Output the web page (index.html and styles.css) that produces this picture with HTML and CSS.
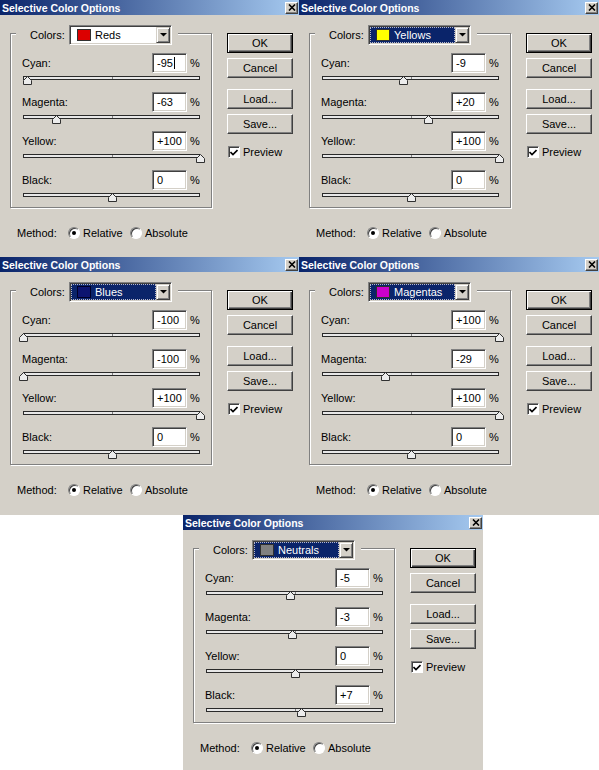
FILE: index.html
```html
<!DOCTYPE html>
<html>
<head>
<meta charset="utf-8">
<link rel="stylesheet" href="styles.css">
</head>
<body>
<div class="page">
  <div class="grid">
    <!-- Reds -->
    <div class="dlg">
      <div class="titlebar"><span class="title">Selective Color Options</span><span class="close"><svg width="8" height="7" viewBox="0 0 8 7"><path d="M1 0.5 L7 6.5 M7 0.5 L1 6.5" stroke="#000" stroke-width="1.6"/></svg></span></div>
      <div class="body">
        <div class="left">
          <div class="group">
            <div class="legend"><span class="legend-label">Colors:</span><div class="combo"><div class="field"><span class="swatch sw-red"></span><span>Reds</span></div><span class="cbtn"><svg width="7" height="4" viewBox="0 0 7 4"><polygon points="0,0 7,0 3.5,3.5" fill="#000"/></svg></span></div></div>
            <div class="rows">
              <div class="row"><div class="line"><span class="lbl">Cyan:</span><span class="num">-95<span class="caret"></span></span><span class="pct">%</span></div><div class="slider"><div class="track"></div><svg class="thumb" style="left:2.5%" width="9" height="9" viewBox="0 0 9 9"><polygon points="0.5,8.5 0.5,4.5 4.5,0.5 8.5,4.5 8.5,8.5" fill="#ececec" stroke="#303030"/></svg></div></div>
              <div class="row"><div class="line"><span class="lbl">Magenta:</span><span class="num">-63</span><span class="pct">%</span></div><div class="slider"><div class="track"></div><svg class="thumb" style="left:18.5%" width="9" height="9" viewBox="0 0 9 9"><polygon points="0.5,8.5 0.5,4.5 4.5,0.5 8.5,4.5 8.5,8.5" fill="#ececec" stroke="#303030"/></svg></div></div>
              <div class="row"><div class="line"><span class="lbl">Yellow:</span><span class="num">+100</span><span class="pct">%</span></div><div class="slider"><div class="track"></div><svg class="thumb" style="left:100%" width="9" height="9" viewBox="0 0 9 9"><polygon points="0.5,8.5 0.5,4.5 4.5,0.5 8.5,4.5 8.5,8.5" fill="#ececec" stroke="#303030"/></svg></div></div>
              <div class="row"><div class="line"><span class="lbl">Black:</span><span class="num">0</span><span class="pct">%</span></div><div class="slider"><div class="track"></div><svg class="thumb" style="left:50%" width="9" height="9" viewBox="0 0 9 9"><polygon points="0.5,8.5 0.5,4.5 4.5,0.5 8.5,4.5 8.5,8.5" fill="#ececec" stroke="#303030"/></svg></div></div>
            </div>
          </div>
          <div class="method"><span class="method-label">Method:</span><span class="opt"><span class="radio on"></span><span class="opt-text">Relative</span></span><span class="opt"><span class="radio"></span><span class="opt-text">Absolute</span></span></div>
        </div>
        <div class="right">
          <div class="btn default">OK</div>
          <div class="btn cancel">Cancel</div>
          <div class="btn load">Load...</div>
          <div class="btn save">Save...</div>
          <div class="chk"><span class="box"><svg width="8" height="7" viewBox="0 0 8 7"><path d="M0.5 3 L3 5.5 L7.5 1" stroke="#000" stroke-width="1.6" fill="none"/></svg></span><span>Preview</span></div>
        </div>
      </div>
    </div>

    <!-- Yellows -->
    <div class="dlg">
      <div class="titlebar"><span class="title">Selective Color Options</span><span class="close"><svg width="8" height="7" viewBox="0 0 8 7"><path d="M1 0.5 L7 6.5 M7 0.5 L1 6.5" stroke="#000" stroke-width="1.6"/></svg></span></div>
      <div class="body">
        <div class="left">
          <div class="group">
            <div class="legend"><span class="legend-label">Colors:</span><div class="combo"><div class="field sel"><span class="swatch sw-yellow"></span><span>Yellows</span></div><span class="cbtn"><svg width="7" height="4" viewBox="0 0 7 4"><polygon points="0,0 7,0 3.5,3.5" fill="#000"/></svg></span></div></div>
            <div class="rows">
              <div class="row"><div class="line"><span class="lbl">Cyan:</span><span class="num">-9</span><span class="pct">%</span></div><div class="slider"><div class="track"></div><svg class="thumb" style="left:45.5%" width="9" height="9" viewBox="0 0 9 9"><polygon points="0.5,8.5 0.5,4.5 4.5,0.5 8.5,4.5 8.5,8.5" fill="#ececec" stroke="#303030"/></svg></div></div>
              <div class="row"><div class="line"><span class="lbl">Magenta:</span><span class="num">+20</span><span class="pct">%</span></div><div class="slider"><div class="track"></div><svg class="thumb" style="left:60%" width="9" height="9" viewBox="0 0 9 9"><polygon points="0.5,8.5 0.5,4.5 4.5,0.5 8.5,4.5 8.5,8.5" fill="#ececec" stroke="#303030"/></svg></div></div>
              <div class="row"><div class="line"><span class="lbl">Yellow:</span><span class="num">+100</span><span class="pct">%</span></div><div class="slider"><div class="track"></div><svg class="thumb" style="left:100%" width="9" height="9" viewBox="0 0 9 9"><polygon points="0.5,8.5 0.5,4.5 4.5,0.5 8.5,4.5 8.5,8.5" fill="#ececec" stroke="#303030"/></svg></div></div>
              <div class="row"><div class="line"><span class="lbl">Black:</span><span class="num">0</span><span class="pct">%</span></div><div class="slider"><div class="track"></div><svg class="thumb" style="left:50%" width="9" height="9" viewBox="0 0 9 9"><polygon points="0.5,8.5 0.5,4.5 4.5,0.5 8.5,4.5 8.5,8.5" fill="#ececec" stroke="#303030"/></svg></div></div>
            </div>
          </div>
          <div class="method"><span class="method-label">Method:</span><span class="opt"><span class="radio on"></span><span class="opt-text">Relative</span></span><span class="opt"><span class="radio"></span><span class="opt-text">Absolute</span></span></div>
        </div>
        <div class="right">
          <div class="btn default">OK</div>
          <div class="btn cancel">Cancel</div>
          <div class="btn load">Load...</div>
          <div class="btn save">Save...</div>
          <div class="chk"><span class="box"><svg width="8" height="7" viewBox="0 0 8 7"><path d="M0.5 3 L3 5.5 L7.5 1" stroke="#000" stroke-width="1.6" fill="none"/></svg></span><span>Preview</span></div>
        </div>
      </div>
    </div>

    <!-- Blues -->
    <div class="dlg mid">
      <div class="titlebar"><span class="title">Selective Color Options</span><span class="close"><svg width="8" height="7" viewBox="0 0 8 7"><path d="M1 0.5 L7 6.5 M7 0.5 L1 6.5" stroke="#000" stroke-width="1.6"/></svg></span></div>
      <div class="body">
        <div class="left">
          <div class="group">
            <div class="legend"><span class="legend-label">Colors:</span><div class="combo"><div class="field sel"><span class="swatch sw-blue"></span><span>Blues</span></div><span class="cbtn"><svg width="7" height="4" viewBox="0 0 7 4"><polygon points="0,0 7,0 3.5,3.5" fill="#000"/></svg></span></div></div>
            <div class="rows">
              <div class="row"><div class="line"><span class="lbl">Cyan:</span><span class="num">-100</span><span class="pct">%</span></div><div class="slider"><div class="track"></div><svg class="thumb" style="left:0%" width="9" height="9" viewBox="0 0 9 9"><polygon points="0.5,8.5 0.5,4.5 4.5,0.5 8.5,4.5 8.5,8.5" fill="#ececec" stroke="#303030"/></svg></div></div>
              <div class="row"><div class="line"><span class="lbl">Magenta:</span><span class="num">-100</span><span class="pct">%</span></div><div class="slider"><div class="track"></div><svg class="thumb" style="left:0%" width="9" height="9" viewBox="0 0 9 9"><polygon points="0.5,8.5 0.5,4.5 4.5,0.5 8.5,4.5 8.5,8.5" fill="#ececec" stroke="#303030"/></svg></div></div>
              <div class="row"><div class="line"><span class="lbl">Yellow:</span><span class="num">+100</span><span class="pct">%</span></div><div class="slider"><div class="track"></div><svg class="thumb" style="left:100%" width="9" height="9" viewBox="0 0 9 9"><polygon points="0.5,8.5 0.5,4.5 4.5,0.5 8.5,4.5 8.5,8.5" fill="#ececec" stroke="#303030"/></svg></div></div>
              <div class="row"><div class="line"><span class="lbl">Black:</span><span class="num">0</span><span class="pct">%</span></div><div class="slider"><div class="track"></div><svg class="thumb" style="left:50%" width="9" height="9" viewBox="0 0 9 9"><polygon points="0.5,8.5 0.5,4.5 4.5,0.5 8.5,4.5 8.5,8.5" fill="#ececec" stroke="#303030"/></svg></div></div>
            </div>
          </div>
          <div class="method"><span class="method-label">Method:</span><span class="opt"><span class="radio on"></span><span class="opt-text">Relative</span></span><span class="opt"><span class="radio"></span><span class="opt-text">Absolute</span></span></div>
        </div>
        <div class="right">
          <div class="btn default">OK</div>
          <div class="btn cancel">Cancel</div>
          <div class="btn load">Load...</div>
          <div class="btn save">Save...</div>
          <div class="chk"><span class="box"><svg width="8" height="7" viewBox="0 0 8 7"><path d="M0.5 3 L3 5.5 L7.5 1" stroke="#000" stroke-width="1.6" fill="none"/></svg></span><span>Preview</span></div>
        </div>
      </div>
    </div>

    <!-- Magentas -->
    <div class="dlg mid">
      <div class="titlebar"><span class="title">Selective Color Options</span><span class="close"><svg width="8" height="7" viewBox="0 0 8 7"><path d="M1 0.5 L7 6.5 M7 0.5 L1 6.5" stroke="#000" stroke-width="1.6"/></svg></span></div>
      <div class="body">
        <div class="left">
          <div class="group">
            <div class="legend"><span class="legend-label">Colors:</span><div class="combo"><div class="field sel"><span class="swatch sw-magenta"></span><span>Magentas</span></div><span class="cbtn"><svg width="7" height="4" viewBox="0 0 7 4"><polygon points="0,0 7,0 3.5,3.5" fill="#000"/></svg></span></div></div>
            <div class="rows">
              <div class="row"><div class="line"><span class="lbl">Cyan:</span><span class="num">+100</span><span class="pct">%</span></div><div class="slider"><div class="track"></div><svg class="thumb" style="left:100%" width="9" height="9" viewBox="0 0 9 9"><polygon points="0.5,8.5 0.5,4.5 4.5,0.5 8.5,4.5 8.5,8.5" fill="#ececec" stroke="#303030"/></svg></div></div>
              <div class="row"><div class="line"><span class="lbl">Magenta:</span><span class="num">-29</span><span class="pct">%</span></div><div class="slider"><div class="track"></div><svg class="thumb" style="left:35.5%" width="9" height="9" viewBox="0 0 9 9"><polygon points="0.5,8.5 0.5,4.5 4.5,0.5 8.5,4.5 8.5,8.5" fill="#ececec" stroke="#303030"/></svg></div></div>
              <div class="row"><div class="line"><span class="lbl">Yellow:</span><span class="num">+100</span><span class="pct">%</span></div><div class="slider"><div class="track"></div><svg class="thumb" style="left:100%" width="9" height="9" viewBox="0 0 9 9"><polygon points="0.5,8.5 0.5,4.5 4.5,0.5 8.5,4.5 8.5,8.5" fill="#ececec" stroke="#303030"/></svg></div></div>
              <div class="row"><div class="line"><span class="lbl">Black:</span><span class="num">0</span><span class="pct">%</span></div><div class="slider"><div class="track"></div><svg class="thumb" style="left:50%" width="9" height="9" viewBox="0 0 9 9"><polygon points="0.5,8.5 0.5,4.5 4.5,0.5 8.5,4.5 8.5,8.5" fill="#ececec" stroke="#303030"/></svg></div></div>
            </div>
          </div>
          <div class="method"><span class="method-label">Method:</span><span class="opt"><span class="radio on"></span><span class="opt-text">Relative</span></span><span class="opt"><span class="radio"></span><span class="opt-text">Absolute</span></span></div>
        </div>
        <div class="right">
          <div class="btn default">OK</div>
          <div class="btn cancel">Cancel</div>
          <div class="btn load">Load...</div>
          <div class="btn save">Save...</div>
          <div class="chk"><span class="box"><svg width="8" height="7" viewBox="0 0 8 7"><path d="M0.5 3 L3 5.5 L7.5 1" stroke="#000" stroke-width="1.6" fill="none"/></svg></span><span>Preview</span></div>
        </div>
      </div>
    </div>
  </div>

  <!-- Neutrals -->
  <div class="dlg bottom">
    <div class="titlebar"><span class="title">Selective Color Options</span><span class="close"><svg width="8" height="7" viewBox="0 0 8 7"><path d="M1 0.5 L7 6.5 M7 0.5 L1 6.5" stroke="#000" stroke-width="1.6"/></svg></span></div>
    <div class="body">
      <div class="left">
        <div class="group">
          <div class="legend"><span class="legend-label">Colors:</span><div class="combo"><div class="field sel"><span class="swatch sw-gray"></span><span>Neutrals</span></div><span class="cbtn"><svg width="7" height="4" viewBox="0 0 7 4"><polygon points="0,0 7,0 3.5,3.5" fill="#000"/></svg></span></div></div>
          <div class="rows">
            <div class="row"><div class="line"><span class="lbl">Cyan:</span><span class="num">-5</span><span class="pct">%</span></div><div class="slider"><div class="track"></div><svg class="thumb" style="left:47.5%" width="9" height="9" viewBox="0 0 9 9"><polygon points="0.5,8.5 0.5,4.5 4.5,0.5 8.5,4.5 8.5,8.5" fill="#ececec" stroke="#303030"/></svg></div></div>
            <div class="row"><div class="line"><span class="lbl">Magenta:</span><span class="num">-3</span><span class="pct">%</span></div><div class="slider"><div class="track"></div><svg class="thumb" style="left:48.5%" width="9" height="9" viewBox="0 0 9 9"><polygon points="0.5,8.5 0.5,4.5 4.5,0.5 8.5,4.5 8.5,8.5" fill="#ececec" stroke="#303030"/></svg></div></div>
            <div class="row"><div class="line"><span class="lbl">Yellow:</span><span class="num">0</span><span class="pct">%</span></div><div class="slider"><div class="track"></div><svg class="thumb" style="left:50%" width="9" height="9" viewBox="0 0 9 9"><polygon points="0.5,8.5 0.5,4.5 4.5,0.5 8.5,4.5 8.5,8.5" fill="#ececec" stroke="#303030"/></svg></div></div>
            <div class="row"><div class="line"><span class="lbl">Black:</span><span class="num">+7</span><span class="pct">%</span></div><div class="slider"><div class="track"></div><svg class="thumb" style="left:53.5%" width="9" height="9" viewBox="0 0 9 9"><polygon points="0.5,8.5 0.5,4.5 4.5,0.5 8.5,4.5 8.5,8.5" fill="#ececec" stroke="#303030"/></svg></div></div>
          </div>
        </div>
        <div class="method"><span class="method-label">Method:</span><span class="opt"><span class="radio on"></span><span class="opt-text">Relative</span></span><span class="opt"><span class="radio"></span><span class="opt-text">Absolute</span></span></div>
      </div>
      <div class="right">
        <div class="btn default">OK</div>
        <div class="btn cancel">Cancel</div>
        <div class="btn load">Load...</div>
        <div class="btn save">Save...</div>
        <div class="chk"><span class="box"><svg width="8" height="7" viewBox="0 0 8 7"><path d="M0.5 3 L3 5.5 L7.5 1" stroke="#000" stroke-width="1.6" fill="none"/></svg></span><span>Preview</span></div>
      </div>
    </div>
  </div>
</div>
</body>
</html>
```

FILE: styles.css
```css
html, body {
  margin: 0;
  padding: 0;
  background: #fff;
}
body {
  font-family: "Liberation Sans", Arial, sans-serif;
  font-size: 11px;
  color: #000;
}
.page {
  width: 599px;
  height: 770px;
  overflow: hidden;
}
.grid {
  display: grid;
  grid-template-columns: 299px 300px;
  grid-template-rows: 257px 258px;
}
.dlg {
  background: #d4d0c8;
  overflow: hidden;
  display: flex;
  flex-direction: column;
}
.bottom {
  margin-left: 183px;
  width: 300px;
  height: 255px;
}
.titlebar {
  height: 15px;
  flex: none;
  background: linear-gradient(90deg, #0a246a, #a6caf0);
  display: flex;
  align-items: center;
  justify-content: space-between;
  padding-left: 2px;
}
.title {
  color: #fff;
  font-weight: bold;
  font-size: 10.5px;
}
.close {
  width: 13px;
  height: 12px;
  margin-right: 1px;
  box-sizing: border-box;
  background: #d4d0c8;
  border: 1px solid;
  border-color: #fff #404040 #404040 #fff;
  box-shadow: inset -1px -1px #808080;
  display: flex;
  align-items: center;
  justify-content: center;
}
.body {
  display: flex;
  padding: 18px 0 0 10px;
}
.left {
  width: 202px;
}
.group {
  box-sizing: border-box;
  width: 202px;
  border: 1px solid #808080;
  box-shadow: inset 1px 1px #fff, 1px 1px #fff;
  padding: 0 10px 5px 11px;
}
.legend {
  display: flex;
  align-items: center;
  height: 20px;
  width: max-content;
  margin: -9px 0 0 -6px;
  padding: 0 6px 0 14px;
  background: #d4d0c8;
}
.legend-label {
  width: 39px;
}
.combo {
  display: flex;
  width: 103px;
  height: 20px;
  box-sizing: border-box;
  padding: 1px;
  border: 1px solid;
  border-color: #808080 #fff #fff #808080;
  box-shadow: inset 1px 1px #404040, inset -1px -1px #d4d0c8;
  background: #fff;
}
.field {
  flex: 1;
  display: flex;
  align-items: center;
  padding-left: 6px;
}
.field.sel {
  background: #0a246a;
  color: #fff;
  outline: 1px dotted #b8b8c8;
  outline-offset: -1px;
}
.swatch {
  width: 14px;
  height: 12px;
  box-sizing: border-box;
  border: 1px solid #303030;
  margin-right: 4px;
}
.sw-red { background: #dc0000; }
.sw-yellow { background: #ffff00; }
.sw-blue { background: #0c1470; border-color: #000028; }
.sw-magenta { background: #cc00cc; }
.sw-gray { background: #808080; }
.cbtn {
  width: 14px;
  height: 16px;
  box-sizing: border-box;
  background: #d4d0c8;
  border: 1px solid;
  border-color: #d4d0c8 #404040 #404040 #d4d0c8;
  box-shadow: inset 1px 1px #fff, inset -1px -1px #808080;
  display: flex;
  align-items: center;
  justify-content: center;
}
.rows {
  margin-top: 8px;
}
.line {
  display: flex;
  align-items: center;
  height: 20px;
}
.lbl {
  flex: 1;
}
.num {
  box-sizing: border-box;
  width: 35px;
  height: 20px;
  background: #fff;
  border: 1px solid;
  border-color: #808080 #fff #fff #808080;
  box-shadow: inset 1px 1px #404040, inset -1px -1px #d4d0c8;
  padding-left: 4px;
  display: flex;
  align-items: center;
}
.caret {
  width: 1px;
  height: 12px;
  background: #000;
  margin-left: 1px;
}
.pct {
  width: 11px;
  margin-left: 3px;
}
.slider {
  position: relative;
  width: 177px;
  height: 9px;
  margin: 3px 0 7px 1px;
}
.row:last-child .slider {
  margin-bottom: 0;
}
.track {
  position: relative;
  margin-top: 3px;
  height: 4px;
  box-sizing: border-box;
  border: 1px solid #2a2a2a;
  background: #e8e8e8;
}
.track::after {
  content: "";
  position: absolute;
  left: 50%;
  top: 0;
  width: 1px;
  height: 2px;
  background: #808080;
}
.thumb {
  position: absolute;
  top: 0;
  margin-left: -4px;
  display: block;
}
.method {
  display: flex;
  align-items: center;
  height: 14px;
  margin: 18px 0 0 7px;
}
.method-label {
  width: 51px;
}
.opt {
  display: flex;
  align-items: center;
}
.opt-text {
  width: 47px;
}
.radio {
  width: 12px;
  height: 12px;
  box-sizing: border-box;
  border-radius: 50%;
  background: #fff;
  border: 1px solid;
  border-color: #808080 #fff #fff #808080;
  box-shadow: inset 1px 1px #404040;
  margin-right: 2px;
  display: flex;
  align-items: center;
  justify-content: center;
}
.radio + .opt-text {
  margin-left: 1px;
}
.radio.on::after {
  content: "";
  width: 4px;
  height: 4px;
  border-radius: 50%;
  background: #000;
}
.right {
  margin-left: 15px;
  width: 66px;
  display: flex;
  flex-direction: column;
}
.btn {
  box-sizing: border-box;
  width: 66px;
  height: 20px;
  background: #d4d0c8;
  border: 1px solid;
  border-color: #fff #404040 #404040 #fff;
  box-shadow: inset -1px -1px #808080;
  display: flex;
  align-items: center;
  justify-content: center;
}
.btn.default {
  border: 1px solid #000;
  box-shadow: inset 1px 1px #fff, inset -1px -1px #404040, inset -2px -2px #808080;
}
.btn.cancel { margin-top: 5px; }
.btn.load { margin-top: 11px; }
.btn.save { margin-top: 5px; }
.chk {
  display: flex;
  align-items: center;
  margin: 12px 0 0 1px;
  height: 12px;
}
.box {
  width: 12px;
  height: 12px;
  box-sizing: border-box;
  background: #fff;
  border: 1px solid;
  border-color: #808080 #fff #fff #808080;
  box-shadow: inset 1px 1px #404040;
  display: flex;
  align-items: center;
  justify-content: center;
  margin-right: 3px;
}
```
